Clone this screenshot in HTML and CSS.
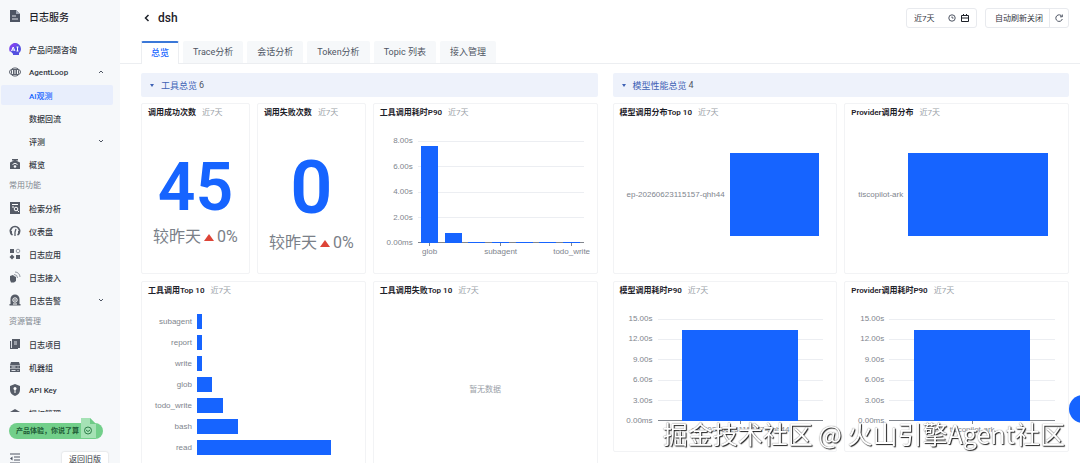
FILE: index.html
```html
<!DOCTYPE html>
<html lang="zh-CN">
<head>
  <meta charset="UTF-8">
  <meta name="viewport" content="width=device-width, initial-scale=1.0">
  <title>日志服务</title>
  <link rel="stylesheet" href="styles.css">
</head>
<body>
  <aside class="sidebar">
    <div class="brand">
      <svg class="icon" viewBox="0 0 12 12"><path fill="#4e5563" d="M1 0h6l4 4v8H1z"/><path fill="#a4abb8" d="M7 0l4 4H7z"/><path stroke="#dfe2e8" d="M3 6h4M3 9h6"/></svg>
      <span>日志服务</span>
    </div>

    <nav class="nav">
      <a class="nav-item" href="#">
        <svg class="icon" viewBox="0 0 12 12"><path fill="#5350e0" d="M6 0a6 6 0 0 1 6 6c0 2-1 3-2 4v2H4v-1.300A6 6 0 0 1 6 0z"/><path fill="#7b45ee" d="M6 0a6 6 0 0 0-5 9L9 1z"/><path fill="none" stroke="#fff" d="M2.500 8l1.700-4 1.700 4M3.200 7h2M8.500 4v4M7.500 4h2M7.500 8h2"/></svg>
        <span>产品问题咨询</span>
      </a>
      <a class="nav-item" href="#">
        <svg class="icon" viewBox="0 0 12 12"><g fill="none" stroke="#5d636e"><rect x="2.500" y="2" width="7" height="8" rx="2.500"/><rect x=".5" y="3.500" width="11" height="5" rx="2.500"/><path d="M4.500 4v4M6 3v6M7.500 4v4"/></g></svg>
        <span>AgentLoop</span>
        <svg class="arrow" viewBox="0 0 6 6"><path d="M1 4l2-2 2 2"/></svg>
      </a>
      <a class="nav-item sub active" href="#"><span>AI观测</span></a>
      <a class="nav-item sub" href="#"><span>数据回流</span></a>
      <a class="nav-item sub" href="#">
        <span>评测</span>
        <svg class="arrow" viewBox="0 0 6 6"><path d="M1 2l2 2 2-2"/></svg>
      </a>
      <a class="nav-item" href="#">
        <svg class="icon" viewBox="0 0 12 12"><path fill="#565c67" d="M3 1h6v1.500H3zM1 4.500L6 2l5 2.500V11H1z"/><path fill="none" stroke="#f6f8fa" d="M3.500 6.500a3.500 3.500 0 0 1 5 0"/><circle cx="6" cy="8.500" r="1.300" fill="#f6f8fa"/></svg>
        <span>概览</span>
      </a>
      <div class="nav-group">常用功能</div>
      <a class="nav-item" href="#">
        <svg class="icon" viewBox="0 0 12 12"><path fill="#565c67" d="M1 0h10v12H1z"/><g fill="none" stroke="#fff"><path d="M3 2.500h6M3 5h2"/><circle cx="7" cy="7" r="1.800"/><path d="M8.300 8.300L10 10"/></g></svg>
        <span>检索分析</span>
      </a>
      <a class="nav-item" href="#">
        <svg class="icon" viewBox="0 0 12 12"><path fill="none" stroke="#565c67" stroke-width="1.600" d="M3.500 10A4.600 4.600 0 1 1 8.500 10"/><path fill="none" stroke="#565c67" stroke-width="1.300" d="M6 11V7l1-3"/><path fill="#565c67" d="M1 6h2v4H2zM11 6H9v4h1z"/></svg>
        <span>仪表盘</span>
      </a>
      <a class="nav-item" href="#">
        <svg class="icon" viewBox="0 0 12 12"><path fill="#565c67" d="M1 1h4v4H1zM7 7h4v4H7zM3 6.500L5.500 9 3 11.500.5 9z"/><circle cx="9" cy="3" r="1.800" fill="none" stroke="#9298a2"/></svg>
        <span>日志应用</span>
      </a>
      <a class="nav-item" href="#">
        <svg class="icon" viewBox="0 0 12 12"><path fill="#565c67" d="M1 5l3-1 1 1 2 1v4l-2 1.500H2L1 9z"/><path fill="none" stroke="#9298a2" d="M5 3.500A3.500 3.500 0 0 1 8.500 7M6 1a5 5 0 0 1 5 5"/></svg>
        <span>日志接入</span>
      </a>
      <a class="nav-item" href="#">
        <svg class="icon" viewBox="0 0 12 12"><path fill="#565c67" d="M1.500 10V5a4.500 4.500 0 0 1 9 0v5h1v1.500H.5V10z"/><circle cx="6" cy="6" r="2.200" fill="none" stroke="#fff"/><path stroke="#fff" d="M6 5v2M4 10h4"/></svg>
        <span>日志告警</span>
        <svg class="arrow" viewBox="0 0 6 6"><path d="M1 2l2 2 2-2"/></svg>
      </a>
      <div class="nav-group">资源管理</div>
      <a class="nav-item" href="#">
        <svg class="icon" viewBox="0 0 12 12"><path fill="#565c67" d="M3 1h8v9H9v1H1V3h2z"/><path stroke="#dfe2e8" d="M5 4h3M5 6h3M2.500 3v7"/></svg>
        <span>日志项目</span>
      </a>
      <a class="nav-item" href="#">
        <svg class="icon" viewBox="0 0 12 12"><path fill="#565c67" d="M2 1h8l1 3H1zM1 4.500h10v3H1zM1 8h10v3H1z"/><path stroke="#dfe2e8" d="M2.500 6h4M2.500 9.500h4M8.500 6h1M8.500 9.500h1"/></svg>
        <span>机器组</span>
      </a>
      <a class="nav-item" href="#">
        <svg class="icon" viewBox="0 0 12 12"><path fill="#565c67" d="M6 0l5 2v4c0 3-2 5-5 6-3-1-5-3-5-6V2z"/><circle cx="6" cy="4.500" r="1.500" fill="#fff"/><path stroke="#fff" d="M6 5v4"/></svg>
        <span>API Key</span>
      </a>
      <a class="nav-item" href="#">
        <svg class="icon" viewBox="0 0 12 12"><path fill="#565c67" d="M6 2l5 3v5H1V5z"/></svg>
        <span>授权管理</span>
      </a>
    </nav>

    <div class="sidebar-foot">
      <button class="feedback">
        <span>产品体验，你说了算</span>
        <svg viewBox="0 0 18 22"><path fill="#a5e2b5" d="M1 1h9l6 6v14H1z"/><path fill="#6fcb87" d="M10 1l6 6h-6z"/><g fill="none" stroke="#2f7d4a"><circle cx="8" cy="13.500" r="3.500"/><path d="M6 13l2 1.500L10 13"/></g></svg>
      </button>
      <div class="foot-row">
        <svg class="icon" viewBox="0 0 12 12"><path stroke="#4e5563" stroke-width="1.200" d="M1 2h10M5 5h6M5 8h6M1 11h10"/><path fill="#4e5563" d="M1 6.500l2.500-2v4z"/></svg>
        <button class="old-version">返回旧版</button>
      </div>
    </div>
  </aside>

  <main class="main">
    <header class="page-head">
      <a class="back" href="#" aria-label="返回"><svg viewBox="0 0 8 8"><path d="M5.500 1l-3 3 3 3"/></svg></a>
      <h1>dsh</h1>
      <button class="ctrl time-range">
        <span>近7天</span>
        <svg viewBox="0 0 8 8"><circle cx="4" cy="4" r="3.200"/><path d="M4 2.500V4h1.500"/></svg>
        <svg class="dark" viewBox="0 0 8 8"><path d="M.5 1.500h7v6h-7zM.5 4h7M2.500 0v2M5.500 0v2"/></svg>
      </button>
      <div class="refresh">
        <button class="ctrl">自动刷新关闭</button>
        <button class="ctrl" aria-label="刷新"><svg viewBox="0 0 8 8"><path d="M7 2.500A3.300 3.300 0 1 0 7.300 5M7.300.5v2.300H5"/></svg></button>
      </div>
    </header>

    <nav class="tabs">
      <a class="tab active" href="#">总览</a>
      <a class="tab" href="#">Trace分析</a>
      <a class="tab" href="#">会话分析</a>
      <a class="tab" href="#">Token分析</a>
      <a class="tab" href="#">Topic 列表</a>
      <a class="tab" href="#">接入管理</a>
    </nav>

    <div class="board">
      <section class="panel">
        <h2 class="panel-title"><i class="caret"></i>工具总览 <span>6</span></h2>
        <div class="cards tools">
          <article class="card">
            <h3>调用成功次数 <small>近7天</small></h3>
            <div class="stat">
              <div class="stat-num">45</div>
              <div class="stat-diff">较昨天<i class="up"></i>0%</div>
            </div>
          </article>
          <article class="card">
            <h3>调用失败次数 <small>近7天</small></h3>
            <div class="stat">
              <div class="stat-num large">0</div>
              <div class="stat-diff">较昨天<i class="up"></i>0%</div>
            </div>
          </article>
          <article class="card wide">
            <h3>工具调用耗时P90 <small>近7天</small></h3>
            <div class="col-chart">
              <div class="y-axis"><span>8.00s</span><span>6.00s</span><span>4.00s</span><span>2.00s</span><span>0.00ms</span></div>
              <div class="plot">
                <div class="lines"><i></i><i></i><i></i><i></i><i></i></div>
                <div class="cols">
                  <b style="height:95%"></b>
                  <b style="height:10%"></b>
                  <b style="height:1%"></b>
                  <b style="height:1%"></b>
                  <b style="height:1%"></b>
                  <b style="height:1%"></b>
                  <b style="height:1%"></b>
                </div>
              </div>
              <div class="x-axis"><span>glob</span><i></i><i></i><span>subagent</span><i></i><i></i><span>todo_write</span></div>
            </div>
          </article>
          <article class="card wide tall">
            <h3>工具调用Top 10 <small>近7天</small></h3>
            <div class="bar-chart">
              <span>subagent</span><div><b style="width:3.300%"></b></div>
              <span>report</span><div><b style="width:3.300%"></b></div>
              <span>write</span><div><b style="width:3.300%"></b></div>
              <span>glob</span><div><b style="width:10%"></b></div>
              <span>todo_write</span><div><b style="width:16.700%"></b></div>
              <span>bash</span><div><b style="width:26.700%"></b></div>
              <span>read</span><div><b style="width:86.700%"></b></div>
            </div>
          </article>
          <article class="card wide tall">
            <h3>工具调用失败Top 10 <small>近7天</small></h3>
            <div class="empty">暂无数据</div>
          </article>
        </div>
      </section>

      <section class="panel">
        <h2 class="panel-title"><i class="caret"></i>模型性能总览 <span>4</span></h2>
        <div class="cards models">
          <article class="card">
            <h3>模型调用分布Top 10 <small>近7天</small></h3>
            <div class="bar-chart single">
              <span>ep-20260623115157-qhh44</span><div><b style="width:95%"></b></div>
            </div>
          </article>
          <article class="card">
            <h3>Provider调用分布 <small>近7天</small></h3>
            <div class="bar-chart single">
              <span>tiscopilot-ark</span><div><b style="width:95%"></b></div>
            </div>
          </article>
          <article class="card">
            <h3>模型调用耗时P90 <small>近7天</small></h3>
            <div class="col-chart">
              <div class="y-axis"><span>15.00s</span><span>12.00s</span><span>9.00s</span><span>6.00s</span><span>3.00s</span><span>0.00ms</span></div>
              <div class="plot">
                <div class="lines"><i></i><i></i><i></i><i></i><i></i><i></i></div>
                <div class="cols"><b style="height:89%"></b></div>
              </div>
              <div class="x-axis"><span>ep-20260623115157-qhh44</span></div>
            </div>
          </article>
          <article class="card">
            <h3>Provider调用耗时P90 <small>近7天</small></h3>
            <div class="col-chart">
              <div class="y-axis"><span>15.00s</span><span>12.00s</span><span>9.00s</span><span>6.00s</span><span>3.00s</span><span>0.00ms</span></div>
              <div class="plot">
                <div class="lines"><i></i><i></i><i></i><i></i><i></i><i></i></div>
                <div class="cols"><b style="height:89%"></b></div>
              </div>
              <div class="x-axis"><span>tiscopilot-ark</span></div>
            </div>
          </article>
        </div>
      </section>
    </div>
  </main>

  <button class="float-btn" aria-label="助手"></button>
  <div class="watermark">掘金技术社区 @ 火山引擎Agent社区</div>
</body>
</html>
```

FILE: styles.css
```css
* {
  box-sizing: border-box;
}
body {
  margin: 0;
  display: flex;
  height: 100vh;
  overflow: hidden;
  background: #fff;
  color: #33373f;
  font-family: Roboto, "Noto Sans CJK SC", sans-serif;
  font-size: 8px;
}
a {
  color: inherit;
  text-decoration: none;
}
button {
  padding: 0;
  border: none;
  background: none;
  color: inherit;
  font: inherit;
  cursor: pointer;
}
h1, h2, h3 {
  margin: 0;
}

/* sidebar */
.sidebar {
  display: flex;
  flex-direction: column;
  flex: none;
  width: 120px;
  background: #f6f8fa;
}
.icon {
  flex: none;
  width: 12px;
  height: 12px;
}
.brand {
  display: flex;
  align-items: center;
  gap: 8px;
  height: 32px;
  padding-left: 9px;
  font-size: 10px;
  font-weight: 500;
  color: #1d2129;
}
.nav {
  flex: 1;
  min-height: 0;
  overflow: hidden;
  display: flex;
  flex-direction: column;
  gap: 3px;
  padding: 7px 7px 0 1px;
}
.nav-item {
  display: flex;
  flex: none;
  align-items: center;
  gap: 8px;
  height: 20px;
  padding: 0 9px 0 8px;
  border-radius: 2px;
  font-weight: 500;
}
.nav-item.sub {
  padding-left: 28px;
}
.nav-item.active {
  background: #e8eefc;
  color: #1664ff;
}
.nav-group {
  flex: none;
  height: 18px;
  padding-left: 8px;
  line-height: 18px;
  color: #80868f;
}
.arrow {
  width: 6px;
  height: 6px;
  margin-left: auto;
  fill: none;
  stroke: #4e5563;
}
.sidebar-foot {
  flex: none;
  height: 51px;
  padding: 5px 12px 0 9px;
  overflow: hidden;
}
.feedback {
  display: flex;
  align-items: flex-end;
  width: 94px;
  height: 22px;
  color: #1f5c36;
  font-size: 7px;
  font-weight: 700;
  line-height: 16px;
  text-align: left;
  white-space: nowrap;
}
.feedback span {
  flex: none;
  width: 94px;
  padding-left: 7px;
  border-radius: 8px;
  background: #72cf8a;
}
.feedback svg {
  flex: none;
  width: 18px;
  height: 22px;
  margin-left: -23px;
}
.foot-row {
  display: flex;
  justify-content: space-between;
  margin-top: 13px;
}
.old-version {
  width: 46px;
  height: 16px;
  border-radius: 2px;
  background: #fff;
  box-shadow: 0 0 2px rgba(0, 0, 0, 0.2);
  line-height: 14px;
}

/* header */
.main {
  flex: 1;
  min-width: 0;
}
.page-head {
  display: flex;
  align-items: center;
  height: 35px;
  padding: 0 11px 0 23px;
}
.page-head svg {
  display: block;
  width: 8px;
  height: 8px;
  fill: none;
  stroke: #4e5563;
}
.page-head .back svg {
  stroke: #1d2129;
  stroke-width: 1.5;
}
.page-head h1 {
  margin: 0 auto 0 7px;
  font-size: 12px;
  font-weight: 500;
  color: #1d2129;
}
.ctrl {
  display: flex;
  align-items: center;
  height: 20px;
  padding: 0 7px;
}
.time-range,
.refresh {
  border: 1px solid #e8eaee;
  border-radius: 3px;
}
.time-range {
  gap: 5px;
  width: 71px;
}
.time-range span {
  margin-right: auto;
}
.page-head .dark {
  stroke: #1d2129;
}
.refresh {
  display: flex;
  margin-left: 8px;
}
.refresh .ctrl {
  height: 18px;
  padding: 0 5px;
}
.refresh .ctrl:first-child {
  padding: 0 6px 0 9px;
  border-right: 1px solid #e8eaee;
}

/* tabs */
.tabs {
  display: flex;
  gap: 4px;
  height: 29px;
  padding: 6px 0 0 21px;
  border-bottom: 1px solid #eceef1;
}
.tab {
  height: 22px;
  padding: 0 10px;
  border-radius: 2px 2px 0 0;
  background: #f6f8fa;
  font-size: 9px;
  line-height: 22px;
  color: #4e5563;
}
.tab.active {
  height: 23px;
  border: 1px solid #eceef1;
  border-top: 2px solid #3b78d8;
  border-bottom: none;
  padding: 0 9px;
  background: #fff;
  color: #1664ff;
  font-weight: 500;
  line-height: 20px;
}

/* dashboard */
.board {
  display: grid;
  grid-template-columns: 1fr 1fr;
  gap: 15px;
  padding: 9px 11px 0 21px;
}
.panel-title {
  display: flex;
  align-items: center;
  height: 24px;
  padding-left: 9px;
  border-radius: 2px;
  background: #eef2fb;
  color: #3f62b5;
  font-size: 9px;
  font-weight: 400;
}
.panel-title span {
  margin-left: 2px;
  color: #4e5563;
}
.caret {
  margin-right: 7px;
  border: 2px solid transparent;
  border-top: 3px solid #3f62b5;
  border-bottom: none;
}
.cards {
  display: grid;
  gap: 7px;
  margin-top: 6px;
}
.tools {
  grid-template-columns: repeat(4, 1fr);
}
.models {
  grid-template-columns: 1fr 1fr;
}
.card {
  display: flex;
  flex-direction: column;
  min-width: 0;
  height: 171px;
  border: 1px solid #f2f3f5;
  border-radius: 2px;
}
.card.wide {
  grid-column: span 2;
}
.card.tall {
  height: 200px;
}
.card h3 {
  padding: 3px 6px 0;
  font-size: 8px;
  font-weight: 600;
  line-height: 12px;
  color: #1d2129;
  white-space: nowrap;
}
.card small {
  margin-left: 4px;
  font-size: 8px;
  font-weight: 400;
  color: #9a9fa8;
}

/* stat cards */
.stat {
  display: flex;
  flex-direction: column;
  flex: 1;
  align-items: center;
  justify-content: center;
  padding-top: 4px;
}
.stat-num {
  color: #1664ff;
  font-size: 66px;
  font-weight: 600;
  line-height: 78px;
}
.stat-num.large {
  font-size: 74px;
  line-height: 90px;
}
.stat-diff {
  display: flex;
  align-items: center;
  font-size: 16px;
  line-height: 20px;
  color: #7a8088;
}
.up {
  margin: 0 3px;
  border: 5px solid transparent;
  border-top: none;
  border-bottom: 7px solid #dd4437;
}

/* column charts */
.col-chart {
  display: grid;
  grid-template-columns: 33px 1fr;
  column-gap: 5px;
  padding: 17px 13px 0 6px;
  font-family: "Liberation Sans", sans-serif;
  line-height: 10px;
  color: #80858d;
}
.y-axis {
  display: flex;
  flex-direction: column;
  justify-content: space-between;
  height: 112px;
  text-align: right;
}
.plot {
  display: grid;
  margin: 5px 0;
}
.lines,
.cols {
  grid-area: 1 / 1;
}
.lines {
  display: flex;
  flex-direction: column;
  justify-content: space-between;
}
.lines i {
  height: 1px;
  background: #eceef2;
}
.lines i:last-child {
  background: #80858d;
}
.cols {
  display: flex;
  align-items: flex-end;
  justify-content: space-around;
}
.cols b {
  flex: 1;
  margin: 0 2%;
  background: #1664ff;
}
.cols b:only-child {
  margin: 0 15%;
}
.x-axis {
  display: flex;
  grid-column: 2;
  margin-top: -5px;
}
.x-axis span,
.x-axis i {
  display: flex;
  flex: 1 1 0;
  flex-direction: column;
  align-items: center;
  width: 0;
  white-space: nowrap;
}
.x-axis span::before {
  content: "";
  width: 1px;
  height: 3px;
  margin-bottom: 1px;
  background: #80858d;
}

/* bar charts */
.bar-chart {
  display: grid;
  grid-template-columns: auto 1fr;
  grid-auto-rows: 21px;
  align-items: center;
  column-gap: 5px;
  padding: 14px 13px 0;
  font-family: "Liberation Sans", sans-serif;
  color: #80858d;
}
.bar-chart span {
  text-align: right;
}
.bar-chart b {
  display: block;
  height: 15px;
  background: #1664ff;
}
.bar-chart.single {
  grid-auto-rows: 120px;
  padding-top: 15px;
}
.single b {
  height: 83px;
}
.empty {
  display: flex;
  flex: 1;
  align-items: center;
  justify-content: center;
  color: #9a9fa8;
}

/* overlays */
.float-btn {
  position: fixed;
  right: -17px;
  bottom: 40px;
  width: 28px;
  height: 28px;
  border-radius: 50%;
  background: #1664ff;
}
.watermark {
  position: fixed;
  right: 15px;
  bottom: 12px;
  color: #fff;
  font-family: "Noto Sans CJK SC", sans-serif;
  font-size: 25px;
  line-height: 36px;
  white-space: nowrap;
  text-shadow: 1px 1px 1px #222, 0 0 1px #555;
}
```
